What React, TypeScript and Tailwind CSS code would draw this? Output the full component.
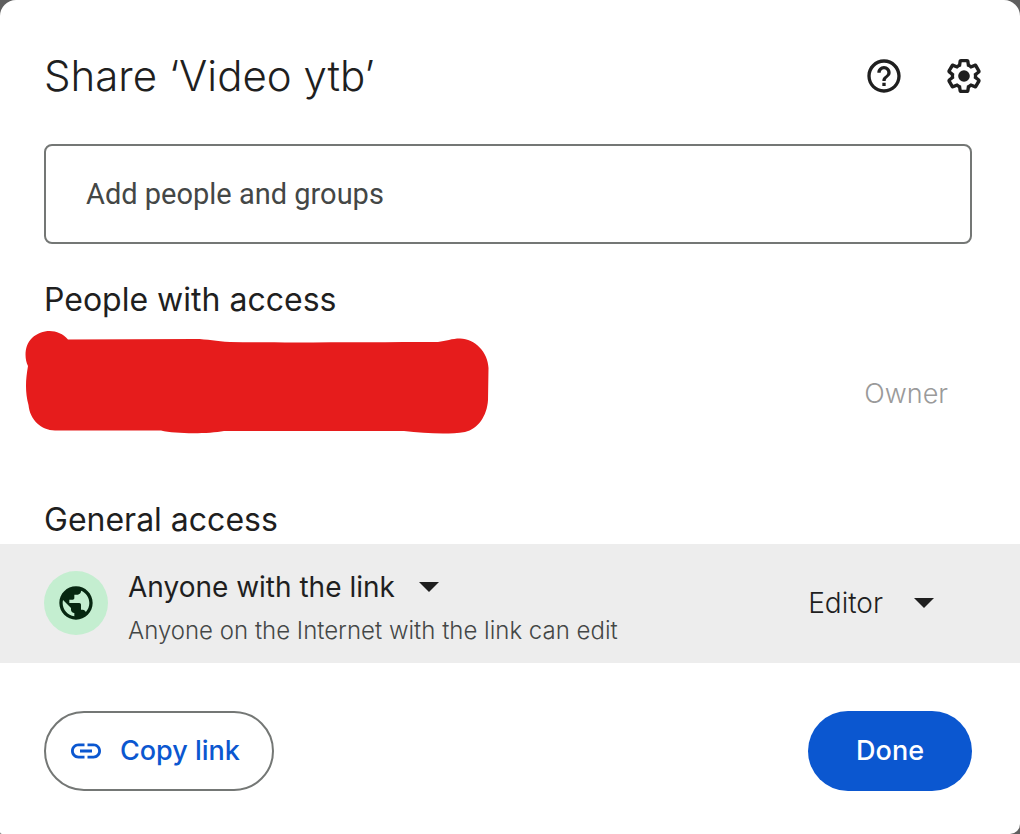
import { useState } from "react";
import { MdHelpOutline, MdLink, MdPublic } from "react-icons/md";

const GearIcon = () => (
  <svg className="size-10" viewBox="0 0 24 24" fill="currentColor" aria-hidden="true">
    <path d="M13.85 22.25h-3.7c-.74 0-1.36-.54-1.45-1.27l-.27-1.89c-.27-.14-.53-.29-.79-.46l-1.8.72c-.7.26-1.47-.03-1.81-.65L2.2 15.53c-.35-.66-.2-1.44.36-1.88l1.53-1.19c-.01-.15-.02-.3-.02-.46 0-.15.01-.31.02-.46l-1.52-1.19c-.59-.45-.74-1.26-.37-1.88l1.85-3.19c.34-.62 1.11-.9 1.79-.63l1.81.73c.26-.17.52-.32.78-.46l.27-1.91c.09-.7.71-1.25 1.44-1.25h3.7c.74 0 1.36.54 1.45 1.27l.27 1.89c.27.14.53.29.79.46l1.8-.72c.71-.26 1.48.03 1.82.65l1.84 3.18c.36.66.2 1.44-.36 1.88l-1.52 1.19c.01.15.02.3.02.46s-.01.31-.02.46l1.52 1.19c.56.45.72 1.23.37 1.86l-1.86 3.22c-.34.62-1.11.9-1.8.63l-1.8-.72c-.26.17-.52.32-.78.46l-.27 1.91c-.1.68-.72 1.22-1.46 1.22zm-3.23-2h2.76l.37-2.55.53-.22c.44-.18.88-.44 1.34-.78l.45-.34 2.38.96 1.38-2.4-2.03-1.58.07-.56c.03-.26.06-.51.06-.78s-.03-.53-.06-.78l-.07-.56 2.03-1.58-1.39-2.4-2.39.96-.45-.35c-.42-.32-.87-.58-1.33-.77l-.52-.22-.37-2.55h-2.76l-.37 2.55-.53.21c-.44.19-.88.44-1.34.79l-.45.33-2.38-.95-1.39 2.39 2.03 1.58-.07.56a7 7 0 0 0-.06.79c0 .26.02.53.06.78l.07.56-2.03 1.58 1.38 2.4 2.39-.96.45.35c.43.33.86.58 1.33.77l.53.22.38 2.55z" />
    <circle cx="12" cy="12" r="3.5" />
  </svg>
);

const Caret = () => (
  <svg
    className="pointer-events-none col-start-1 row-start-1 h-[10px] w-5 self-center justify-self-end"
    viewBox="0 0 20 10"
    fill="currentColor"
    aria-hidden="true"
  >
    <path d="M0 0h20L10 10z" />
  </svg>
);

// Marker scribble that hides the owner's name and address
const Redaction = () => (
  <svg className="h-[132px] w-[468px]" viewBox="24 328 468 132" fill="#e61c1c" aria-hidden="true">
    <path d="M68 339.500L195 339C208 339 216 341.500 230 342C290 343 370 342 438 342C446 341 452 338.500 460 338.500C475 339 488 352 488.500 368L488 400C487 416 478 429 465 432C446 435 424 433 404 431H224C208 434 176 434 161 430.500H55C41 430 30 420 28.500 405C25 392 25.500 380 28 366C24 358 24.500 345 32 338C43 328 59 329 68 339.500Z" />
  </svg>
);

type DropdownProps = {
  label: string;
  options: string[];
  className: string;
};

const Dropdown = ({ label, options, className }: DropdownProps) => {
  const [value, setValue] = useState(options[0]);

  return (
    <div className="inline-grid h-10 text-[#1f1f1f]">
      <select
        aria-label={label}
        value={value}
        onChange={(e) => setValue(e.target.value)}
        className={`col-start-1 row-start-1 cursor-pointer appearance-none bg-transparent leading-10 [field-sizing:content] ${className}`}
      >
        {options.map((option) => (
          <option key={option}>{option}</option>
        ))}
      </select>
      <Caret />
    </div>
  );
};

export default function App() {
  return (
    <div className="min-h-screen bg-[#5f5f5f] font-[Inter,sans-serif]">
      <main className="min-h-screen rounded-t-2xl rounded-br-[10px] rounded-bl-xs bg-white pb-[43px] text-[#1f1f1f]">
        <header className="flex items-center justify-between pt-12 pr-9 pl-11">
          <h1 className="text-[42px] leading-14 font-light">Share ‘Video ytb’</h1>
          <div className="flex gap-10">
            <button type="button" aria-label="Help">
              <MdHelpOutline className="size-10" />
            </button>
            <button type="button" aria-label="Settings">
              <GearIcon />
            </button>
          </div>
        </header>

        <div className="mt-10 pr-12 pl-11">
          <input
            type="text"
            aria-label="Add people and groups"
            placeholder="Add people and groups"
            className="block h-[100px] w-full rounded-lg border-2 border-[#747775] px-10 font-[Roboto,sans-serif] text-[29px] placeholder:text-[#444746]"
          />
        </div>

        <section className="mt-9">
          <h2 className="pl-11 text-[32px] leading-10">People with access</h2>
          <div className="mt-1 flex h-[140px] items-center justify-between pr-[72px] pl-6">
            <Redaction />
            <span className="text-[27px] font-light text-[#9a9a9a]">Owner</span>
          </div>
        </section>

        <section className="mt-9">
          <h2 className="pl-11 text-[32px] leading-10">General access</h2>
          <div className="mt-1 flex items-center bg-[#ededed] pt-[11px] pr-[86px] pb-3 pl-11">
            <div className="flex size-16 shrink-0 items-center justify-center rounded-full bg-[#c4eed0] text-[#072711]">
              <MdPublic className="size-10" />
            </div>
            <div className="ml-5 flex flex-1 flex-col items-start gap-1 pt-3">
              <Dropdown
                label="General access"
                options={["Anyone with the link", "Restricted"]}
                className="pr-11 text-[28px]"
              />
              <p className="text-2xl leading-10 font-light text-[#444746]">
                Anyone on the Internet with the link can edit
              </p>
            </div>
            <Dropdown
              label="Role"
              options={["Editor", "Viewer", "Commenter"]}
              className="pr-[51px] text-[28px] font-light"
            />
          </div>
        </section>

        <footer className="flex items-center justify-between pt-12 pr-12 pl-11">
          <button
            type="button"
            className="flex h-20 items-center gap-4 rounded-full border-2 border-[#747775] pr-8 pl-[22px] text-[27px] font-medium text-[#0b57d0]"
          >
            <MdLink className="size-9" />
            Copy link
          </button>
          <button
            type="button"
            className="h-20 rounded-full bg-[#0b57d0] px-12 text-[27px] font-medium text-white"
          >
            Done
          </button>
        </footer>
      </main>
    </div>
  );
}
